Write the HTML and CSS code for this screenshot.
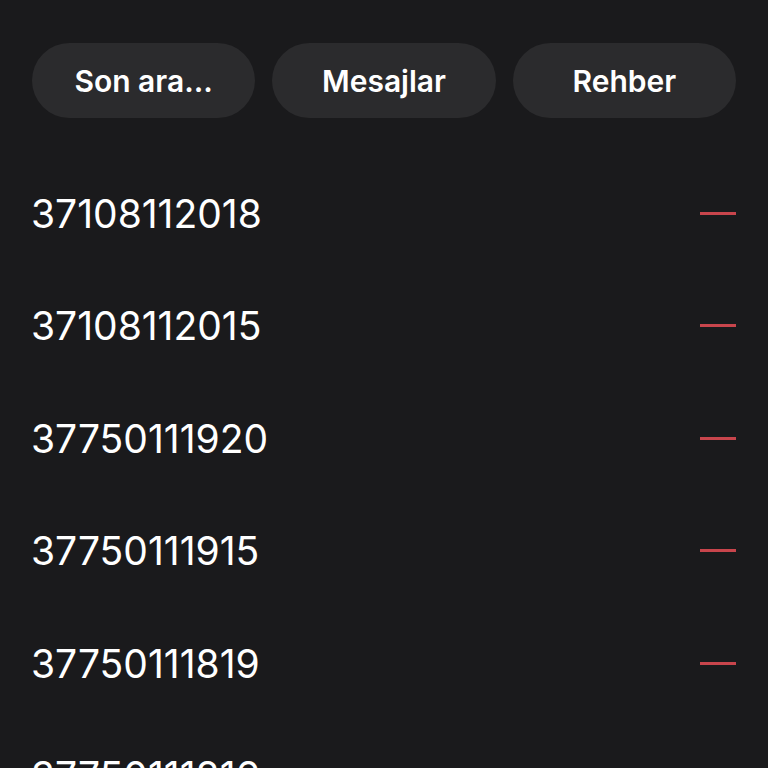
FILE: index.html
```html
<!DOCTYPE html>
<html lang="tr">
  <head>
    <meta charset="UTF-8" />
    <title>Son aramalar</title>
    <link rel="stylesheet" href="styles.css">
  </head>
  <body>
    <div class="tabs">
      <button class="tab">Son ara...</button>
      <button class="tab">Mesajlar</button>
      <button class="tab">Rehber</button>
    </div>

    <ul class="calls">
      <li class="call"><span class="number">37108112018</span><span class="dash"></span></li>
      <li class="call"><span class="number">37108112015</span><span class="dash"></span></li>
      <li class="call"><span class="number">37750111920</span><span class="dash"></span></li>
      <li class="call"><span class="number">37750111915</span><span class="dash"></span></li>
      <li class="call"><span class="number">37750111819</span><span class="dash"></span></li>
      <li class="call"><span class="number">37750111816</span><span class="dash"></span></li>
    </ul>
  </body>
</html>
```

FILE: styles.css
```css
html,
body {
  margin: 0;
  height: 100%;
  overflow: hidden;
}

body {
  font-family: Inter, "Liberation Sans", Arial, sans-serif;
  background: #1a1a1c;
  color: #fff;
  padding: 43px 32px 0 32px;
  box-sizing: border-box;
}

.tabs {
  display: flex;
  gap: 17px;
}

.tab {
  flex: 1;
  height: 75px;
  border: none;
  border-radius: 38px;
  background: #2b2b2d;
  color: #fff;
  font-family: inherit;
  font-size: 30px;
  font-weight: 600;
}

.calls {
  list-style: none;
  margin: 39px 0 0 0;
  padding: 0;
}

.call {
  display: flex;
  align-items: center;
  justify-content: space-between;
  height: 112.5px;
}

.number {
  font-size: 39px;
  margin-left: -1px;
}

.dash {
  width: 36px;
  height: 3px;
  background: #c8454c;
}
```
